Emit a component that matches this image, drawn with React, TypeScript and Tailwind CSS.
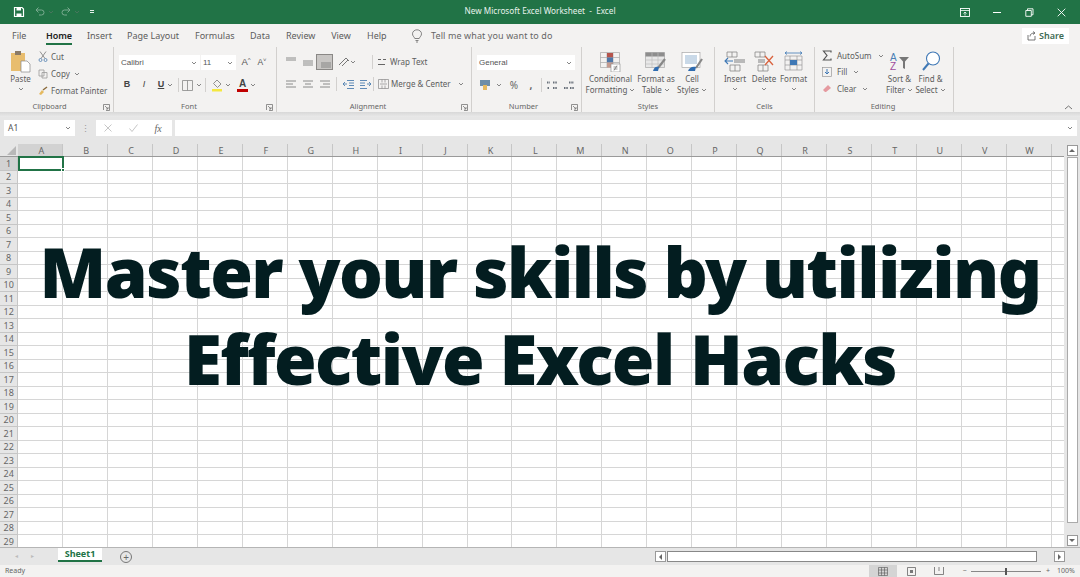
import { ReactNode } from "react"

const colLetters = "ABCDEFGHIJKLMNOPQRSTUVW".split("")
const rowNumbers = Array.from({ length: 29 }, (_, i) => i + 1)
const tabs = [
    ["Insert", "w-[24px] ml-[15px]"],
    ["Page Layout", "w-[52px] ml-[16px]"],
    ["Formulas", "w-[39px] ml-[16px]"],
    ["Data", "w-[20px] ml-[16px]"],
    ["Review", "w-[29px] ml-[16px]"],
    ["View", "w-[20px] ml-[16px]"],
    ["Help", "w-[19px] ml-[16px]"],
]

function Svg({ w = 16, h = 16, className = "", children }: { w?: number; h?: number; className?: string; children: ReactNode }) {
    return <svg width={w} height={h} viewBox={`0 0 ${w} ${h}`} fill="none" className={`shrink-0 ${className}`}>{children}</svg>
}

function Chevron({ className = "" }: { className?: string }) {
    return (
        <svg width="6" height="4" viewBox="0 0 6 4" fill="none" className={`shrink-0 ${className}`}>
            <path d="M1 1l2 2 2-2" stroke="#777" strokeWidth="0.9" />
        </svg>
    )
}

function Launcher() {
    return (
        <svg width="7" height="7" viewBox="0 0 7 7" fill="none" className="shrink-0">
            <path d="M.5 6V.5H6.5V6.5H3" stroke="#777" strokeWidth="0.8" />
            <path d="M2 2l3 3M5 3v2H3" stroke="#777" strokeWidth="0.8" />
        </svg>
    )
}

// centers its child in a fixed-width slot, that's how the ribbon rows are spaced
function Slot({ w, children, className = "" }: { w: number; children: ReactNode; className?: string }) {
    return <div className={`flex items-center justify-center shrink-0 ${className}`} style={{ width: w }}>{children}</div>
}

function Group({ w, label, launcher, labelClass = "", children }: { w: number; label: string; launcher?: boolean; labelClass?: string; children: ReactNode }) {
    return (
        <div className="relative flex flex-col shrink-0 h-full border-r border-[#d2d0ce]" style={{ width: w }}>
            <div className="h-[54px] shrink-0">{children}</div>
            <div className={`h-[11px] flex items-center justify-center text-[7.5px] leading-none text-[#666] ${labelClass}`}>{label}</div>
            {launcher && <div className="absolute right-[3px] bottom-[1px]"><Launcher /></div>}
        </div>
    )
}

function Sep({ className = "h-[14px]" }: { className?: string }) {
    return <div className={`w-px bg-[#d2d0ce] shrink-0 ${className}`} />
}

function AlignLines({ mode }: { mode: "top" | "mid" | "bot" | "left" | "center" | "right" }) {
    const paths = {
        top: "M2 3h10M2 5h10",
        mid: "M2 6h10M2 8h10M2 10h10",
        bot: "M3 8h10M3 10h10M3 12h10",
        left: "M2 4h10M2 7h7M2 10h10",
        center: "M2 4h10M4 7h6M2 10h10",
        right: "M2 4h10M5 7h7M2 10h10",
    }
    return <Svg w={14} h={14}><path d={paths[mode]} stroke="#808080" strokeWidth="0.9" /></Svg>
}

function BigLabel({ lines, chevronInline }: { lines: string[]; chevronInline?: boolean }) {
    return (
        <div className="flex flex-col items-center text-[8px] leading-[11px] text-[#5c5c5c] whitespace-nowrap">
            {lines.map((l, i) => (
                <span key={l} className="flex items-center gap-[2px]">
                    {l}
                    {chevronInline && i === lines.length - 1 && <Chevron />}
                </span>
            ))}
            {!chevronInline && <Chevron className="mt-[3px]" />}
        </div>
    )
}

function BigButton({ w, icon, lines, chevronInline }: { w: number; icon: ReactNode; lines: string[]; chevronInline?: boolean }) {
    return (
        <div className="flex flex-col items-center shrink-0 pt-[3px]" style={{ width: w }}>
            <div className="h-[23px] flex items-center justify-center">{icon}</div>
            <BigLabel lines={lines} chevronInline={chevronInline} />
        </div>
    )
}

function SmallBtn({ icon, label, chevron, className = "" }: { icon: ReactNode; label: string; chevron?: boolean; className?: string }) {
    return (
        <div className={`h-[17px] flex items-center text-[8px] text-[#5c5c5c] whitespace-nowrap ${className}`}>
            {icon}
            <span className="ml-[3px]">{label}</span>
            {chevron && <Chevron className="ml-[4px]" />}
        </div>
    )
}

function TitleBar() {
    return (
        <div className="h-[24px] bg-[#217346] relative flex items-center shrink-0 text-white">
            <Svg w={12} h={12} className="ml-[13px]">
                <path d="M1.5 1.5h7.5l1.5 1.5v7.5h-9z" stroke="#fff" strokeWidth="1.2" />
                <path d="M3.5 2h4.5v2.5h-4.5zM3.5 7.5h5v3h-5z" fill="#fff" />
            </Svg>
            <Svg w={12} h={12} className="ml-[9px] opacity-40">
                <path d="M2 4h5.5a2.5 2.5 0 010 5H5M2 4l2.5-2.5M2 4l2.5 2.5" stroke="#fff" strokeWidth="1" />
            </Svg>
            <Chevron className="ml-[2px] opacity-50" />
            <Svg w={12} h={12} className="ml-[6px] opacity-40">
                <path d="M10 4H4.5a2.5 2.5 0 000 5H7M10 4L7.5 1.5M10 4L7.5 6.5" stroke="#fff" strokeWidth="1" />
            </Svg>
            <Chevron className="ml-[2px] opacity-50" />
            <Svg w={6} h={6} className="ml-[9px]">
                <path d="M1 1.5h4M1 3.5h4" stroke="#fff" strokeWidth="0.9" />
            </Svg>
            <div className="absolute inset-x-0 top-[5px] text-center text-[8.2px] leading-[12px] text-[#e8f2ec]">
                New Microsoft Excel Worksheet&nbsp; -&nbsp; Excel
            </div>
            <div className="ml-auto flex items-center pr-[14px]">
                <Svg w={10} h={9}>
                    <rect x="0.5" y="0.5" width="9" height="8" stroke="#fff" strokeWidth="0.9" />
                    <path d="M.5 2.5h9M5 7.5V4M3.5 5.5L5 4l1.500 1.500" stroke="#fff" strokeWidth="0.8" />
                </Svg>
                <div className="w-[8px] h-px bg-white ml-[23px]" />
                <Svg w={9} h={9} className="ml-[24px]">
                    <path d="M2.5 2.5V.8H8v6H6.3M.8 2.5h5.5v5.8H.8z" stroke="#fff" strokeWidth="0.9" />
                </Svg>
                <Svg w={9} h={9} className="ml-[23px]">
                    <path d="M.7.7l7.6 7.6M8.3.7L.7 8.3" stroke="#fff" strokeWidth="0.9" />
                </Svg>
            </div>
        </div>
    )
}

function TabRow() {
    return (
        <div className="h-[23px] flex items-center shrink-0 text-[9px] text-[#5c5c5c] bg-[#f3f2f1] whitespace-nowrap">
            <span className="ml-[12px] w-[13px]">File</span>
            <div className="ml-[21px] w-[26px] h-full relative flex items-center justify-center font-semibold text-[#222]">
                Home
                <div className="absolute bottom-[2px] inset-x-0 h-[2px] bg-[#217346]" />
            </div>
            {tabs.map(([t, c]) => (
                <span key={t} className={`${c} text-center`}>{t}</span>
            ))}
            <Svg w={12} h={14} className="ml-[25px]">
                <path d="M3.8 9.5C3 7.5 1.5 7 1.5 4.8a4.5 4 0 019 0C10.500 7 9 7.500 8.200 9.500zM4.500 11.500h3M5 13h2" stroke="#666" strokeWidth="0.8" />
            </Svg>
            <span className="ml-[8px] text-[#666] tracking-[0.1px]">Tell me what you want to do</span>
            <div className="ml-auto mr-[11px] w-[47px] h-[16px] bg-white flex items-center justify-center gap-[3px] text-[#3d6b54] font-semibold text-[9px]">
                <Svg w={9} h={10}>
                    <path d="M1 4v5h7V5M3 5.500C3 3 5 2 7.500 2M6 .5L8 2 6 3.500" stroke="#555" strokeWidth="0.8" />
                </Svg>
                Share
            </div>
        </div>
    )
}

function ClipboardGroup() {
    return (
        <Group w={114} label="Clipboard" launcher labelClass="pr-[14px]">
            <div className="flex h-full">
                <div className="w-[38px] flex flex-col items-center pt-[3px] pl-[3px]">
                    <Svg w={22} h={23}>
                        <rect x="1" y="3" width="14" height="18" fill="#e8bd6e" />
                        <rect x="5" y="1" width="6" height="4" fill="#8a7a66" />
                        <path d="M11 11h6l3 3v8h-9z" fill="#fff" stroke="#888" strokeWidth="0.7" />
                    </Svg>
                    <span className="text-[8px] leading-[11px] text-[#5c5c5c]">Paste</span>
                    <Chevron className="mt-[3px]" />
                </div>
                <div className="flex flex-col pt-[1px]">
                    <SmallBtn label="Cut" icon={
                        <Svg w={10} h={11}>
                            <path d="M2 .5l5 7M8 .5l-5 7" stroke="#777" strokeWidth="0.8" />
                            <circle cx="2.500" cy="9" r="1.500" stroke="#4f7fb0" strokeWidth="0.8" />
                            <circle cx="7.500" cy="9" r="1.500" stroke="#4f7fb0" strokeWidth="0.8" />
                        </Svg>
                    } />
                    <SmallBtn label="Copy" chevron icon={
                        <Svg w={10} h={10}>
                            <path d="M1 1h5v6H1zM4 3.500h5V9H4z" stroke="#999" strokeWidth="0.8" fill="#f3f2f1" />
                        </Svg>
                    } />
                    <SmallBtn label="Format Painter" icon={
                        <Svg w={10} h={10}>
                            <path d="M5 4l4-3" stroke="#8a6a3a" strokeWidth="1.400" />
                            <path d="M1 8l3-4 2 2-3 3z" fill="#e5b95f" />
                        </Svg>
                    } />
                </div>
            </div>
        </Group>
    )
}

function FontGroup() {
    return (
        <Group w={163} label="Font" launcher labelClass="pr-[12px]">
            <div className="flex items-center h-[15px] mt-[8px] ml-[5px] font-['Liberation_Sans',sans-serif] text-[8px] text-[#555]">
                <div className="w-[81px] h-[15px] bg-white flex items-center pl-[2px] pr-[3px]">Calibri<Chevron className="ml-auto" /></div>
                <div className="w-[35px] h-[15px] bg-white ml-px flex items-center pl-[2px] pr-[3px]">11<Chevron className="ml-auto" /></div>
                <Slot w={16} className="ml-[2px] text-[9.5px]">A<sup className="text-[6px]">^</sup></Slot>
                <Slot w={16} className="text-[8.5px]">A<sup className="text-[6px]">˅</sup></Slot>
            </div>
            <div className="flex items-center h-[16px] mt-[7px] ml-[5px] text-[9px] text-[#444] font-['Liberation_Sans',sans-serif]">
                <Slot w={8} className="font-bold ml-[4px]">B</Slot>
                <Slot w={8} className="italic ml-[9px]">I</Slot>
                <Slot w={8} className="underline ml-[9px] font-bold">U</Slot>
                <Chevron className="ml-[2px]" />
                <Sep className="h-[14px] ml-[5px]" />
                <Svg w={11} h={11} className="ml-[3px]"><path d="M.5.5h10v10H.5zM5.500.5v10" stroke="#888" strokeWidth="0.8" /></Svg>
                <Chevron className="ml-[3px]" />
                <Sep className="h-[14px] ml-[3px]" />
                <Svg w={12} h={13} className="ml-[5px]">
                    <path d="M6 1l4 4-3.500 3.500-4-4z" stroke="#777" strokeWidth="0.8" />
                    <path d="M1 10h10v2.500H1z" fill="#f4e840" />
                </Svg>
                <Chevron className="ml-[2px]" />
                <div className="ml-[6px] w-[11px] flex flex-col items-center leading-[9px] font-bold text-[10px]">
                    A
                    <div className="w-[11px] h-[3px] bg-[#c00000] mt-[1px]" />
                </div>
                <Chevron className="ml-[2px]" />
            </div>
        </Group>
    )
}

function AlignmentGroup() {
    return (
        <Group w={195} label="Alignment" launcher labelClass="pr-[12px]">
            <div className="flex items-center h-[18px] mt-[6px] ml-[5px] text-[8px] text-[#5c5c5c]">
                <Slot w={17}><AlignLines mode="top" /></Slot>
                <Slot w={17}><AlignLines mode="mid" /></Slot>
                <Slot w={17} className="h-[16px] bg-[#c8c6c4] border border-[#8a8886]"><AlignLines mode="bot" /></Slot>
                <Slot w={20} className="ml-[3px]">
                    <Svg w={13} h={12}><path d="M2 9L9 2M5 10l6-6M9 2l3 3" stroke="#777" strokeWidth="1" /></Svg>
                    <Chevron />
                </Slot>
                <Sep className="h-[14px] ml-[16px]" />
                <div className="flex items-center ml-[4px] w-[80px] h-[14px] whitespace-nowrap">
                    <Svg w={10} h={10}><path d="M1 2.500h3M6 2.500h3M1 7.500h7" stroke="#666" strokeWidth="1.100" /></Svg>
                    <span className="ml-[3px]">Wrap Text</span>
                </div>
            </div>
            <div className="flex items-center h-[16px] mt-[5px] ml-[5px] text-[8px] text-[#5c5c5c]">
                <Slot w={17}><AlignLines mode="left" /></Slot>
                <Slot w={17}><AlignLines mode="center" /></Slot>
                <Slot w={17}><AlignLines mode="right" /></Slot>
                <Sep className="h-[14px] ml-[3px]" />
                <Slot w={19} className="ml-[2px]">
                    <Svg w={13} h={11}><path d="M5 1.500h7M7 4h5M7 6.500h5M5 9.500h7M5 5H1M3 3L1 5l2 2" stroke="#4f7fb0" strokeWidth="0.9" /></Svg>
                </Slot>
                <Slot w={14}>
                    <Svg w={13} h={11}><path d="M1 1.500h7M1 4h5M1 6.500h5M1 9.500h7M8 5h4M10 3l2 2-2 2" stroke="#4f7fb0" strokeWidth="0.9" /></Svg>
                </Slot>
                <Sep className="h-[14px] ml-px" />
                <div className="flex items-center ml-[4px] whitespace-nowrap">
                    <Svg w={11} h={10}><path d="M.5.500h10v9H.5zM4 .500v3M7 .500v3M4 6.500v3M7 6.500v3M2 5h7" stroke="#888" strokeWidth="0.7" /></Svg>
                    <span className="ml-[2px]">Merge &amp; Center</span>
                    <Chevron className="ml-[7px]" />
                </div>
            </div>
        </Group>
    )
}

function NumberGroup() {
    return (
        <Group w={110} label="Number" launcher labelClass="pr-[6px]">
            <div className="w-[98px] h-[15px] mt-[8px] ml-[5px] bg-white flex items-center pl-[2px] pr-[3px] text-[8px] text-[#555] font-['Liberation_Sans',sans-serif]">
                General<Chevron className="ml-auto" />
            </div>
            <div className="flex items-center h-[16px] mt-[7px] ml-[5px] text-[10px] text-[#666]">
                <Svg w={12} h={12} className="ml-[2px]">
                    <rect x="1" y="1" width="10" height="6" fill="#6d8ea8" />
                    <rect x="4" y="6" width="4" height="5" fill="#e5b95f" />
                </Svg>
                <Chevron className="ml-[5px]" />
                <Slot w={14} className="ml-[5px]">%</Slot>
                <Slot w={12} className="ml-[4px] font-bold">,</Slot>
                <Sep className="h-[14px] ml-[4px]" />
                <Slot w={14} className="ml-[3px]">
                    <Svg w={12} h={11}><path d="M1 2.500h3M7 2.500h4M7 8h4M3 8h-2" stroke="#68707a" strokeWidth="1.800" strokeDasharray="1.500 .8" /></Svg>
                </Slot>
                <Slot w={14} className="ml-[3px]">
                    <Svg w={12} h={11}><path d="M6 2.500h5M1 8h4M7 8h4" stroke="#68707a" strokeWidth="1.800" strokeDasharray="1.500 .8" /></Svg>
                </Slot>
            </div>
        </Group>
    )
}

function StylesGroup() {
    return (
        <Group w={133} label="Styles">
            <div className="flex pl-[4px]">
                <BigButton w={49} chevronInline lines={["Conditional", "Formatting"]} icon={
                    <Svg w={21} h={20}>
                        <path d="M.5.500h19v15H.5zM7 .500v15M13 .500v15M.5 5.500h19M.5 10.500h19" stroke="#a8a8a8" strokeWidth="0.7" />
                        <rect x="7" y="1" width="6" height="4.500" fill="#b5544c" />
                        <rect x="7" y="5.500" width="6" height="5" fill="#4e77a8" />
                        <rect x="7" y="10.500" width="6" height="5" fill="#c49a8f" />
                        <rect x="11" y="12" width="9" height="8" fill="#fff" stroke="#888" strokeWidth="0.6" />
                        <path d="M13.500 15h4M13.500 17h4M17 13.500l-3 5" stroke="#555" strokeWidth="0.6" />
                    </Svg>
                } />
                <BigButton w={42} chevronInline lines={["Format as", "Table"]} icon={
                    <Svg w={22} h={20}>
                        <path d="M.5.500h19v15H.5z" stroke="#a8a8a8" strokeWidth="0.7" fill="#e8e8e8" />
                        <rect x=".5" y=".5" width="19" height="4" fill="#8d8d8d" />
                        <path d="M7 .500v15M13 .500v15M.5 8h19M.5 12h19" stroke="#bdbdbd" strokeWidth="0.7" />
                        <path d="M20 7l-7 9" stroke="#888" strokeWidth="2.200" />
                        <path d="M8 19c1-4 3-5 6-4l-1 4z" fill="#2f6cb0" />
                    </Svg>
                } />
                <BigButton w={30} chevronInline lines={["Cell", "Styles"]} icon={
                    <Svg w={22} h={20}>
                        <rect x="1" y=".5" width="18" height="15" fill="#fff" stroke="#a8a8a8" strokeWidth="0.7" />
                        <rect x="4" y="3" width="12" height="9" fill="#c9d9e8" />
                        <path d="M21 7l-6 9" stroke="#888" strokeWidth="2.200" />
                        <path d="M7 19c1-3 4-5 8-4l-1 4z" fill="#2f6cb0" />
                    </Svg>
                } />
            </div>
        </Group>
    )
}

function CellsGroup() {
    return (
        <Group w={100} label="Cells">
            <div className="flex pl-[6px]">
                <BigButton w={28} lines={["Insert"]} icon={
                    <Svg w={22} h={21}>
                        <path d="M3 1h10v5H3zM8 1v5M6 14h10v6H6zM11 14v6" stroke="#888" strokeWidth="0.8" />
                        <rect x="10" y="8" width="11" height="4" fill="#b9b9b9" />
                        <path d="M9 10H1M4 7l-3 3 3 3" stroke="#3f78b5" strokeWidth="1.100" />
                    </Svg>
                } />
                <BigButton w={30} lines={["Delete"]} icon={
                    <Svg w={22} h={21}>
                        <path d="M2 1h10v5H2zM7 1v5M5 14h10v6H5zM10 14v6" stroke="#888" strokeWidth="0.8" />
                        <rect x="5" y="8" width="7" height="4" fill="#b9b9b9" />
                        <path d="M12 5l8 9M20 5l-8 9" stroke="#d9623d" strokeWidth="1.300" />
                    </Svg>
                } />
                <BigButton w={29} lines={["Format"]} icon={
                    <Svg w={20} h={21}>
                        <path d="M1 2h17M1 2l2-1.500M1 2l2 1.500M18 2l-2-1.500M18 2l-2 1.500" stroke="#3f78b5" strokeWidth="0.8" />
                        <path d="M1 5h17v14H1zM6 5v14M13 5v14M1 9h17M1 14h17" stroke="#999" strokeWidth="0.7" />
                        <rect x="6" y="9" width="7" height="5" fill="#3f78b5" />
                    </Svg>
                } />
            </div>
        </Group>
    )
}

function EditingGroup() {
    return (
        <Group w={139} label="Editing" labelClass="pr-[2px]">
            <div className="flex pl-[7px]">
                <div className="flex flex-col w-[62px]">
                    <SmallBtn label="AutoSum" chevron className="gap-[2px]" icon={
                        <Svg w={10} h={11}><path d="M9 2.500V1H1.500L5 5.500 1.500 10H9V8.500" stroke="#555" strokeWidth="1.200" /></Svg>
                    } />
                    <SmallBtn label="Fill" chevron className="gap-[2px] mt-[-1px]" icon={
                        <Svg w={10} h={10}><rect x=".5" y=".5" width="9" height="9" stroke="#999" strokeWidth="0.7" /><path d="M5 2v5M3 5l2 2 2-2" stroke="#3f78b5" strokeWidth="1" /></Svg>
                    } />
                    <SmallBtn label="Clear" chevron className="gap-[2px]" icon={
                        <Svg w={10} h={9}><path d="M1 6l5-5 3 3-5 4H3z" fill="#e59aa0" /></Svg>
                    } />
                </div>
                <BigButton w={31} chevronInline lines={["Sort &", "Filter"]} icon={
                    <Svg w={21} h={20}>
                        <text x="1" y="9" fontSize="10" fill="#4a7fb5" fontFamily="Liberation Sans">A</text>
                        <text x="1" y="18" fontSize="10" fill="#a04d9e" fontFamily="Liberation Sans">Z</text>
                        <path d="M10 5h10l-4 4.500V17l-2-1V9.500z" fill="#777" />
                    </Svg>
                } />
                <BigButton w={31} chevronInline lines={["Find &", "Select"]} icon={
                    <Svg w={20} h={21}>
                        <circle cx="12" cy="7.500" r="6.500" stroke="#3f78b5" strokeWidth="1.100" fill="#fff" />
                        <path d="M7.500 12.500L2 19" stroke="#3f78b5" strokeWidth="2" />
                    </Svg>
                } />
            </div>
        </Group>
    )
}

function Ribbon() {
    return (
        <div className="h-[65px] bg-[#f3f2f1] flex shrink-0 relative">
            <ClipboardGroup />
            <FontGroup />
            <AlignmentGroup />
            <NumberGroup />
            <StylesGroup />
            <CellsGroup />
            <EditingGroup />
            <div className="absolute right-[7px] bottom-[2px]">
                <svg width="9" height="5" viewBox="0 0 9 5" fill="none"><path d="M1 4l3.500-3L8 4" stroke="#666" strokeWidth="0.9" /></svg>
            </div>
        </div>
    )
}

function FormulaBar() {
    return (
        <div className="h-[32px] shrink-0 bg-[#e6e6e6] flex flex-col">
            <div className="h-[5px] bg-gradient-to-b from-[#d8d8d8] to-[#e9e9e9]" />
            <div className="h-[3px]" />
            <div className="h-[16px] flex items-center">
                <div className="ml-[4px] w-[71px] h-[16px] bg-white flex items-center pl-[4px] pr-[4px] text-[8.5px] text-[#555]">
                    A1<Chevron className="ml-auto" />
                </div>
                <div className="w-[21px] flex justify-center text-[9px] leading-none text-[#999]">⋮</div>
                <div className="w-[76px] h-[16px] bg-white flex items-center">
                    <Slot w={24}><Svg w={8} h={8}><path d="M.5.5l7 7M7.500.5l-7 7" stroke="#c0c0c0" strokeWidth="0.9" /></Svg></Slot>
                    <Slot w={26}><Svg w={9} h={8}><path d="M.5 4.500l2.500 3L8.500.5" stroke="#c0c0c0" strokeWidth="0.9" /></Svg></Slot>
                    <Slot w={24} className="font-['Liberation_Serif',serif] italic text-[10px] text-[#666]">fx</Slot>
                </div>
                <div className="ml-[3px] mr-[3px] flex-1 h-[16px] bg-white flex items-center justify-end pr-[4px]">
                    <Chevron />
                </div>
            </div>
            <div className="h-[8px]" />
        </div>
    )
}

function Sheet() {
    return (
        <div className="flex-1 relative overflow-hidden bg-white">
            <div className="flex h-[12px] bg-[#e6e6e6] border-b border-[#9a9a9a] box-content">
                <div className="w-[18.300px] shrink-0 relative">
                    <div className="absolute right-[2px] bottom-[1px] w-0 h-0 border-l-[9px] border-l-transparent border-b-[9px] border-b-[#b8b8b8]" />
                </div>
                {colLetters.map((c, i) => (
                    <div key={c} className={`w-[44.930px] shrink-0 flex items-center justify-center pl-[2px] text-[9px] leading-none text-[#666] border-r border-[#c6c6c6] ${i === 0 ? "bg-[#d2d2d2]" : ""}`}>{c}</div>
                ))}
            </div>
            {rowNumbers.map((r) => (
                <div key={r} className="flex h-[13.500px]">
                    <div className={`w-[18.300px] shrink-0 flex items-center justify-center text-[9px] leading-none text-[#666] border-r border-b border-[#c6c6c6] ${r === 1 ? "bg-[#d2d2d2]" : "bg-[#e6e6e6]"}`}>{r}</div>
                    {colLetters.map((c) => (
                        <div key={c} className="w-[44.930px] shrink-0 border-r border-b border-[#d6d6d6]" />
                    ))}
                    <div className="flex-1 border-b border-[#d6d6d6]" />
                </div>
            ))}
            {/* A1 selection */}
            <div className="absolute left-[18px] top-[12px] w-[46px] h-[15px] border-2 border-[#217346]">
                <div className="absolute -right-[3px] -bottom-[3px] w-[4px] h-[4px] bg-[#217346] border border-white" />
            </div>
            {/* big headline sits on top of the grid */}
            <div className="absolute left-0 top-[84px] w-[1080px] flex flex-col items-center text-[#031d20] font-black text-[69px] leading-[87px] whitespace-nowrap">
                <span className="tracking-[-1.6px]">Master your skills by utilizing</span>
                <span className="tracking-[-1.6px]">Effective Excel Hacks</span>
            </div>
        </div>
    )
}

function VScroll() {
    return (
        <div className="w-[16px] shrink-0 bg-[#e6e6e6] flex flex-col items-center pt-px pb-px">
            <div className="w-[11px] h-[11px] bg-white border border-[#999] flex items-center justify-center">
                <div className="w-0 h-0 border-x-[3px] border-x-transparent border-b-[3px] border-b-[#666]" />
            </div>
            <div className="w-[11px] flex-1 mt-px bg-white border border-[#aaa] mb-[12px]" />
            <div className="w-[11px] h-[11px] bg-white border border-[#999] flex items-center justify-center">
                <div className="w-0 h-0 border-x-[3px] border-x-transparent border-t-[3px] border-t-[#666]" />
            </div>
        </div>
    )
}

function SheetTabs() {
    return (
        <div className="h-[18px] shrink-0 bg-[#e6e6e6] border-t border-[#b5b5b5] flex items-center">
            <div className="w-[58px] flex items-center pl-[15px] gap-[13px] text-[6px] text-[#bbb]">
                <span>◂</span><span>▸</span>
            </div>
            <div className="w-[44px] h-[14px] self-start bg-white border-b-2 border-[#217346] flex items-center justify-center text-[9px] font-bold text-[#217346]">Sheet1</div>
            <div className="ml-[18px] w-[12px] h-[12px] rounded-full border border-[#777] flex items-center justify-center text-[10px] leading-none text-[#666]">+</div>
            <div className="ml-[523px] w-[11px] h-[11px] bg-white border border-[#999] flex items-center justify-center">
                <div className="w-0 h-0 border-y-[3px] border-y-transparent border-r-[3px] border-r-[#666]" />
            </div>
            <div className="ml-px w-[370px] h-[11px] bg-white border border-[#888]" />
            <div className="ml-[17px] w-[11px] h-[11px] bg-white border border-[#999] flex items-center justify-center">
                <div className="w-0 h-0 border-y-[3px] border-y-transparent border-l-[3px] border-l-[#666]" />
            </div>
        </div>
    )
}

function StatusBar() {
    return (
        <div className="h-[12px] shrink-0 bg-[#f3f2f1] flex items-center text-[7px] text-[#666]">
            <span className="ml-[5px]">Ready</span>
            <div className="ml-auto w-[28px] h-full bg-[#d4d4d4] flex items-center justify-center">
                <Svg w={10} h={9}><path d="M.5.5h9v8h-9zM3.500.5v8M6.500.5v8M.5 3h9M.5 6h9" stroke="#555" strokeWidth="0.6" /></Svg>
            </div>
            <Slot w={28}><Svg w={9} h={9}><path d="M.5.5h8v8h-8z" stroke="#555" strokeWidth="0.7" /><rect x="3" y="3" width="3" height="3" fill="#777" /></Svg></Slot>
            <Slot w={28}><Svg w={10} h={8}><path d="M.5 0v7.500h9V0M5 0v4" stroke="#555" strokeWidth="0.7" /></Svg></Slot>
            <span className="ml-[9px] w-[6px] text-center">−</span>
            <div className="ml-[3px] w-[70px] h-px bg-[#888] relative">
                <div className="absolute left-[34px] -top-[3px] w-[2px] h-[7px] bg-[#555]" />
            </div>
            <span className="ml-[4px] w-[6px] text-center">+</span>
            <span className="ml-[6px] mr-[6px] w-[17px]">100%</span>
        </div>
    )
}

export default function App() {
    return (
        <div className="w-[1080px] h-[577px] flex flex-col overflow-hidden bg-[#e6e6e6] font-['Noto_Sans',sans-serif]">
            <TitleBar />
            <TabRow />
            <Ribbon />
            <FormulaBar />
            <div className="flex-1 flex min-h-0">
                <Sheet />
                <VScroll />
            </div>
            <SheetTabs />
            <StatusBar />
        </div>
    )
}
